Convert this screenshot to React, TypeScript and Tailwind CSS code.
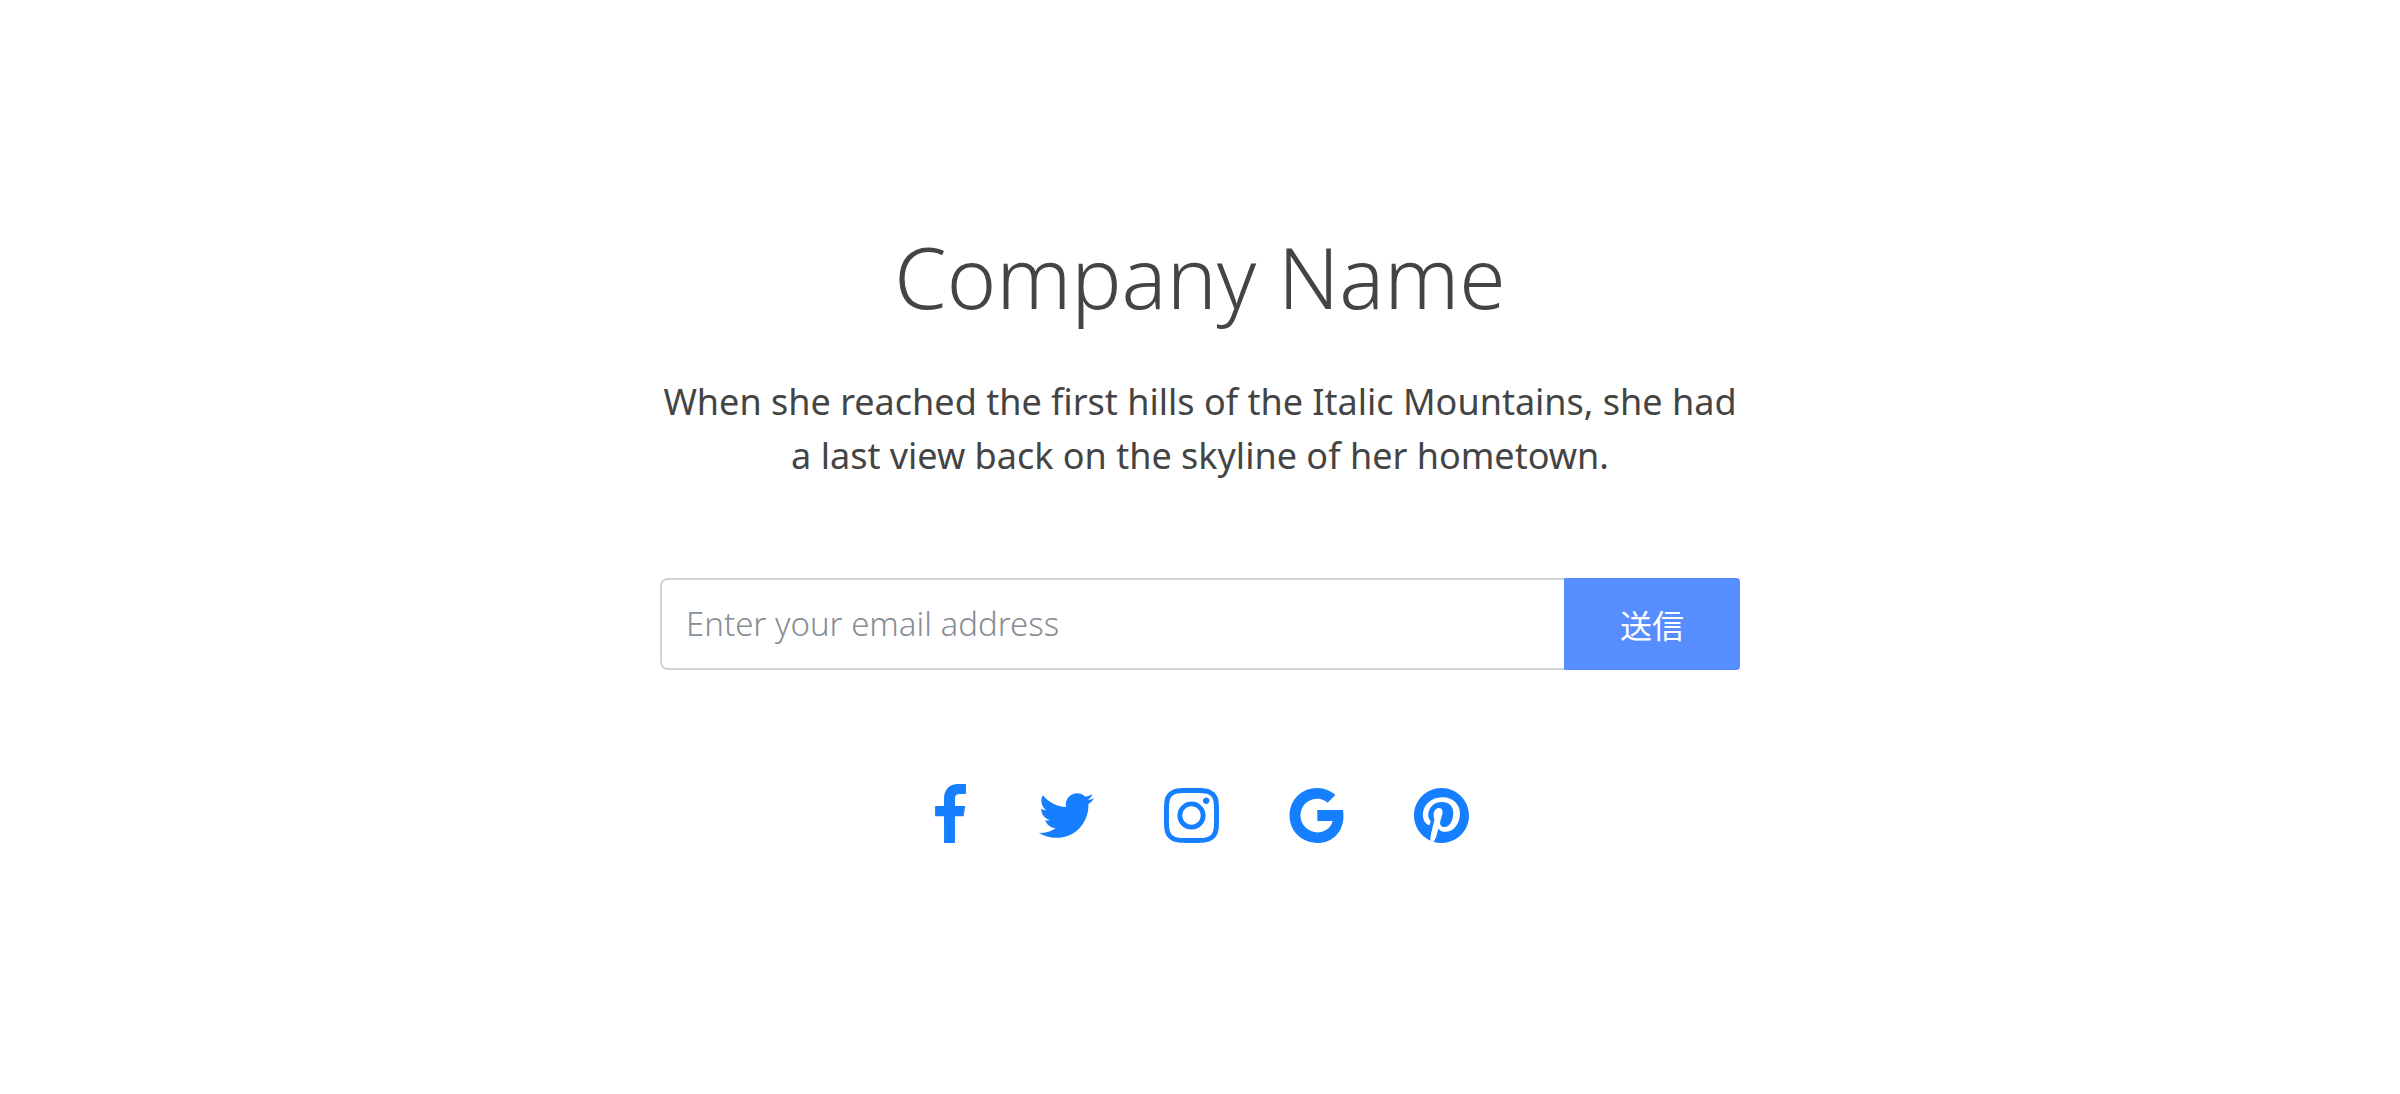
import type { ReactNode } from "react";
import { FaInstagram } from "react-icons/fa";
import { IoLogoGoogle, IoLogoPinterest, IoLogoTwitter } from "react-icons/io";

function FacebookIcon() {
  return (
    <svg viewBox="0 0 93 178" className="mr-[3px] h-[59px] w-[31px]" fill="currentColor" aria-hidden="true">
      <path d="M93 0v30H76c-12 0-16 5-16 14v22h31l-5 31H60v81H27V97H0V66h27V44C27 16 44 0 69 0z" />
    </svg>
  );
}

const links: { label: string; icon: ReactNode }[] = [
  { label: "Facebook", icon: <FacebookIcon /> },
  { label: "Twitter", icon: <IoLogoTwitter viewBox="20 20 472 472" className="size-[55px]" /> },
  { label: "Instagram", icon: <FaInstagram viewBox="0 32 448 448" className="size-[55px]" /> },
  { label: "Google", icon: <IoLogoGoogle viewBox="48 48 416 416" className="size-[55px]" /> },
  { label: "Pinterest", icon: <IoLogoPinterest viewBox="32 32 448 448" className="size-[55px]" /> },
];

export default function App() {
  return (
    <main className="flex min-h-screen flex-col items-center bg-white px-6 pt-[217px] font-['Noto_Sans','Noto_Sans_CJK_JP',sans-serif] text-[#444444]">
      <div className="w-full max-w-[1080px]">
        <h1 className="text-center text-[84px] leading-[120px] font-light">Company Name</h1>
        <p className="mt-[38px] text-center text-[36px] leading-[54px]">
          When she reached the first hills of the Italic Mountains, she had a last view back on the
          skyline of her hometown.
        </p>
        <form className="mt-[95px] flex h-[92px]" onSubmit={(e) => e.preventDefault()}>
          <input
            type="email"
            aria-label="Email address"
            placeholder="Enter your email address"
            className="min-w-0 flex-1 rounded-l-lg border-2 border-r-0 border-[#ced4da] bg-white px-6 text-[33px] font-light placeholder:text-[#868e96] placeholder:opacity-100"
          />
          <button
            type="submit"
            className="w-44 rounded-r bg-[#568dff] font-['Noto_Sans_CJK_JP',sans-serif] text-[32px] text-white"
          >
            送信
          </button>
        </form>
        <nav aria-label="Social" className="mt-[114px] flex items-end justify-center gap-[70px] pl-1 text-[#167fff]">
          {links.map((l) => (
            <a key={l.label} href="#" aria-label={l.label}>
              {l.icon}
            </a>
          ))}
        </nav>
      </div>
    </main>
  );
}
